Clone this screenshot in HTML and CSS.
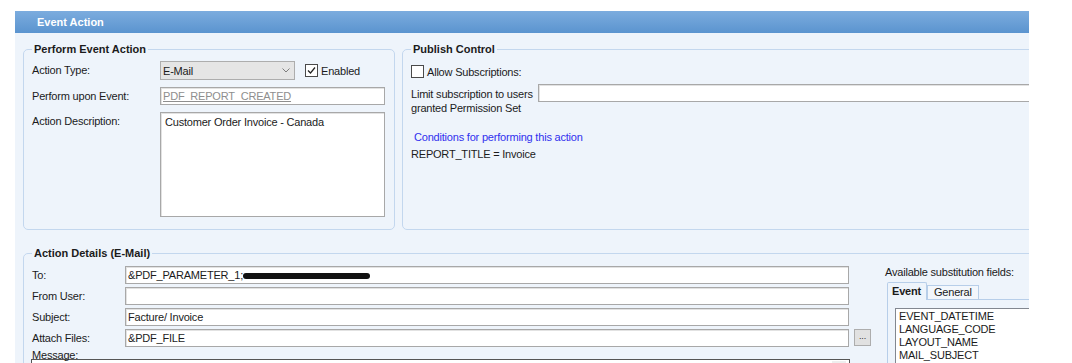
FILE: index.html
```html
<!DOCTYPE html>
<html>
<head>
<meta charset="utf-8">
<title>Event Action</title>
<link rel="stylesheet" href="styles.css">
</head>
<body>
<div class="window">
  <div class="titlebar">Event Action</div>
  <div class="content">
    <div class="top-row">
      <fieldset class="group group-perform">
        <legend>Perform Event Action</legend>
        <div class="perform-grid">
          <span class="lbl">Action Type:</span>
          <div class="type-row">
            <div class="select">
              <span>E-Mail</span>
              <svg class="chev" width="8" height="5" viewBox="0 0 8 5"><polyline points="0.5,0.5 4,4 7.5,0.5" fill="none" stroke="#7d7d7d" stroke-width="1"/></svg>
            </div>
            <span class="check"><svg width="11" height="11" viewBox="0 0 11 11"><polyline points="2,5.5 4.5,8 9,2.5" fill="none" stroke="#222" stroke-width="1.2"/></svg></span>
            <span class="check-lbl">Enabled</span>
          </div>
          <span class="lbl">Perform upon Event:</span>
          <div class="input link-input"><span class="link">PDF_REPORT_CREATED</span></div>
          <span class="lbl lbl-top">Action Description:</span>
          <div class="textarea">Customer Order Invoice - Canada</div>
        </div>
      </fieldset>
      <fieldset class="group group-publish">
        <legend>Publish Control</legend>
        <div class="publish-col">
          <div class="check-row">
            <span class="check"></span>
            <span class="check-lbl">Allow Subscriptions:</span>
          </div>
          <div class="limit-row">
            <span class="limit-lbl">Limit subscription to users<br>granted Permission Set</span>
            <div class="input limit-input"></div>
          </div>
          <div class="cond-title">Conditions for performing this action</div>
          <div class="cond-text">REPORT_TITLE = Invoice</div>
        </div>
      </fieldset>
    </div>
    <fieldset class="group group-details">
      <legend>Action Details (E-Mail)</legend>
      <div class="details-row">
        <div class="details-main">
          <div class="details-grid">
            <span class="lbl">To:</span>
            <div class="input">&amp;PDF_PARAMETER_1;<span class="redact"></span></div>
            <span></span>
            <span class="lbl">From User:</span>
            <div class="input"></div>
            <span></span>
            <span class="lbl">Subject:</span>
            <div class="input">Facture/ Invoice</div>
            <span></span>
            <span class="lbl">Attach Files:</span>
            <div class="input">&amp;PDF_FILE</div>
            <div class="btn">...</div>
          </div>
          <div class="msg-lbl">Message:</div>
          <div class="msg-box"><span class="msg-scroll"></span></div>
        </div>
        <div class="subst">
          <div class="subst-title">Available substitution fields:</div>
          <div class="tabs">
            <span class="tab tab-active">Event</span>
            <span class="tab">General</span>
          </div>
          <div class="tab-page">
            <div class="list">
              <div>EVENT_DATETIME</div>
              <div>LANGUAGE_CODE</div>
              <div>LAYOUT_NAME</div>
              <div>MAIL_SUBJECT</div>
            </div>
          </div>
        </div>
      </div>
    </fieldset>
  </div>
</div>
</body>
</html>
```
FILE: styles.css
```css
* { box-sizing: border-box; }

body {
  margin: 0;
  background: #ffffff;
  font-family: "Liberation Sans", Arial, sans-serif;
  font-size: 11px;
  letter-spacing: -0.2px;
  color: #1b1b1b;
}

.window {
  margin: 11px 0 0 15px;
  width: 1014px;
  height: 352px;
  overflow: hidden;
  background: #eef4fb;
}

.titlebar {
  height: 22px;
  line-height: 22px;
  padding-left: 22px;
  color: #ffffff;
  font-weight: bold;
  letter-spacing: 0;
  background: linear-gradient(#7cacde, #5b94cf);
}

.content {
  padding: 10px 0 0 8px;
}

.top-row {
  display: flex;
  gap: 7px;
  height: 187px;
}

fieldset.group {
  margin: 0;
  border: 1px solid #c3d7ee;
  border-radius: 5px;
  padding: 5px 8px 12px 8px;
  min-width: 0;
}

fieldset.group legend {
  font-weight: bold;
  letter-spacing: 0;
  padding: 0 2px;
  line-height: 13px;
}

fieldset.group-perform {
  flex: none;
  width: 372px;
  height: 187px;
}

fieldset.group-publish {
  flex: none;
  width: 720px;
  height: 187px;
}

.perform-grid {
  display: grid;
  grid-template-columns: 128px 225px;
  grid-template-rows: 19px 18px 105px;
  row-gap: 7px;
}

.lbl {
  align-self: center;
  line-height: 13px;
  white-space: nowrap;
}

.lbl-top {
  align-self: start;
  padding-top: 3px;
}

.type-row {
  display: flex;
  align-items: center;
}

.select {
  width: 135px;
  height: 19px;
  border: 1px solid #adadad;
  background: #e5e5e5;
  display: flex;
  align-items: center;
  justify-content: space-between;
  padding: 0 4px 0 2px;
}

.check {
  flex: none;
  width: 13px;
  height: 13px;
  border: 1px solid #4a4a4a;
  background: #ffffff;
  display: flex;
  align-items: center;
  justify-content: center;
}

.type-row .check {
  margin-left: 10px;
}

.check-lbl {
  margin-left: 3px;
}

.input {
  height: 18px;
  border: 1px solid #a8a8a8;
  box-shadow: inset 1px 1px 0 #e2e2e2;
  background: #ffffff;
  padding: 0 2px;
  line-height: 16px;
  white-space: nowrap;
  overflow: hidden;
}

.link {
  color: #8e8e8e;
  text-decoration: underline;
}

.textarea {
  border: 1px solid #a8a8a8;
  box-shadow: inset 1px 1px 0 #e2e2e2;
  background: #ffffff;
  padding: 3px 4px;
  line-height: 13px;
}

.publish-col {
  display: flex;
  flex-direction: column;
}

.check-row {
  display: flex;
  align-items: center;
  height: 19px;
  margin-top: 1px;
}

.limit-row {
  display: flex;
  margin-top: 3px;
}

.limit-lbl {
  width: 127px;
  flex: none;
  line-height: 14px;
  padding-top: 3px;
  white-space: nowrap;
}

.limit-input {
  flex: none;
  width: 560px;
}

.cond-title {
  margin-top: 16px;
  padding-left: 3px;
  line-height: 13px;
  color: #3030ee;
}

.cond-text {
  margin-top: 4px;
  line-height: 13px;
}

fieldset.group-details {
  margin-top: 17px;
  width: 1100px;
  height: 130px;
  padding-top: 6px;
}

.details-row {
  display: flex;
  gap: 14px;
}

.details-main {
  flex: none;
  width: 839px;
}

.details-grid {
  display: grid;
  grid-template-columns: 93px 724px 22px;
  grid-auto-rows: 18px;
  row-gap: 3px;
}

.redact {
  display: inline-block;
  width: 127px;
  height: 6px;
  border-radius: 3px;
  background: #111111;
  vertical-align: middle;
}

.btn {
  justify-self: end;
  width: 17px;
  height: 17px;
  border: 1px solid #adadad;
  background: #e1e1e1;
  font-size: 9px;
  line-height: 13px;
  text-align: center;
  color: #333;
}

.msg-lbl {
  margin-top: 2px;
  line-height: 13px;
}

.msg-box {
  margin-top: -3px;
  margin-left: -1px;
  width: 819px;
  height: 40px;
  border: 1px solid #555555;
  background: #ffffff;
  display: flex;
  justify-content: flex-end;
}

.msg-scroll {
  width: 14px;
  height: 10px;
  margin: 1px 3px 0 0;
  background: #eeeeee;
}

.subst {
  flex: none;
  width: 260px;
}

.subst-title {
  line-height: 13px;
}

.tabs {
  display: flex;
  align-items: flex-end;
  margin: 3px 0 0 2px;
}

.tab {
  height: 14px;
  padding: 0 6px;
  line-height: 13px;
  border: 1px solid #b7cee9;
  border-bottom: none;
  background: #f3f7fc;
}

.tab-active {
  position: relative;
  height: 18px;
  margin-bottom: -1px;
  padding: 2px 4px 0;
  width: 40px;
  font-weight: bold;
  background: #eef4fb;
  border-radius: 2px 2px 0 0;
}

.tab-page {
  margin-left: 2px;
  border: 1px solid #b7cee9;
  padding: 8px 0 0 7px;
  height: 80px;
}

.list {
  border: 1px solid #828790;
  background: #ffffff;
  padding: 1px 3px;
  line-height: 13px;
  height: 70px;
}
```
